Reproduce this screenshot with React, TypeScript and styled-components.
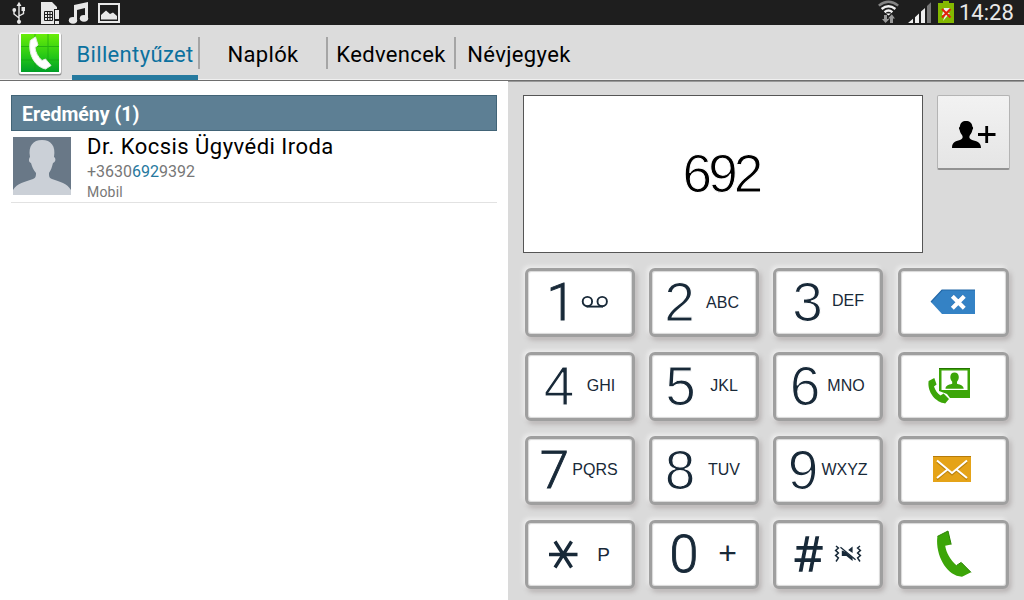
import React from "react";
import styled, { createGlobalStyle } from "styled-components";

const TABS = ["Billentyűzet", "Naplók", "Kedvencek", "Névjegyek"];

const VoicemailIcon = () => (
  <svg width="28" height="14" viewBox="0 0 28 14" fill="none" stroke="#182938" strokeWidth="1.9">
    <circle cx="6.4" cy="6.6" r="4.7" />
    <circle cx="21.2" cy="6.6" r="4.7" />
    <path d="M5.5 11.6H22" />
  </svg>
);

const VibrateIcon = () => (
  <svg width="28" height="20" viewBox="0 0 28 20" fill="none" stroke="#182938" strokeWidth="1.5">
    <path d="M2 2L4.4 4L1.6 6.4L4.4 9L1.6 11.6L4.4 14L2 17.5" />
    <path d="M26 2L23.6 4L26.4 6.4L23.6 9L26.4 11.6L23.6 14L26 17.5" />
    <path d="M7.8 6.6L11.5 7.8L18.6 13.8V17L12.4 12H7.8ZM14.2 6L18.6 2.6V9Z" fill="#182938" stroke="none" />
    <path d="M7.4 2.6L22.2 14.8" stroke="#fff" strokeWidth="1.2" />
    <path d="M6.5 3.2L21.6 15.8" strokeWidth="1.3" />
  </svg>
);

const DeleteIcon = () => (
  <svg width="46" height="26" viewBox="0 0 46 26">
    <path d="M1 13L12 1H45V25H12Z" fill="#3482c5" />
    <path d="M1 13L12 1H45" fill="none" stroke="#2368a8" strokeWidth="1.2" />
    <path d="M22.3 7L34.3 19M34.3 7L22.3 19" stroke="#1d61a2" strokeWidth="4.4" />
    <path d="M22.3 7.2L34.3 19.2M34.3 7.2L22.3 19.2" stroke="#fff" strokeWidth="4.2" />
  </svg>
);

const VideoCallIcon = () => (
  <svg width="44" height="38" viewBox="0 0 44 38" fill="#3ca508">
    <path d="M12 2H43V32H23L20 28L12 25Z" />
    <path d="M14.5 4.5H40.5V24H14.5Z" fill="#fff" />
    <path d="M12 2.5H43" stroke="#257303" />
    <path d="M18.5 22.8C18.5 19.8 21 19 25.2 17.8V15.8C22.5 13.4 22.3 6.6 27.5 6.6S32.8 13.4 30 15.8V17.8C34 19 36.5 19.8 36.7 22.8Z" />
    <path
      d="M1.6 15L7.3 11.9L9.6 18.6L7 20.4C8.3 24.4 10.4 27.2 13.5 29.6L16.6 27.6L22 33L18.2 37.4C9 36.5 0 26.5 1.6 15Z"
      stroke="#fff"
      strokeWidth="1.4"
      paintOrder="stroke"
    />
  </svg>
);

const MailIcon = () => (
  <svg width="38" height="26" viewBox="0 0 38 26" fill="none">
    <path d="M0 0H38V26H0Z" fill="#e5a318" />
    <path d="M0 .5H38" stroke="#b67b09" />
    <path d="M4 6L19 18.5L34 6M4 23.5L14.5 14.5M34 23.5L23.5 14.5" stroke="#b8810e" strokeWidth="1.8" />
    <path d="M4 4.5L19 17L34 4.5M4 22L14.5 13.5M34 22L23.5 13.5" stroke="#fff" strokeWidth="2" />
  </svg>
);

const CallIcon = () => (
  <svg width="36" height="48" viewBox="0 0 36 48">
    <path
      d="M1.4 6.4L12 1L15.2 14.5L9.2 15.8C10.2 22.5 14.2 30 20.6 35.4L25.2 32.4L35 42.3L26 46.8C10 46 -1 24 1.4 6.4Z"
      fill="#3ca508"
    />
    <path d="M1.4 6.4L12 1L15.2 14.5M20.6 35.4L25.2 32.4L35 42.3" fill="none" stroke="#2b8303" strokeWidth="1" />
  </svg>
);

type KeyData = {
  digit: string;
  at: number;
  label: React.ReactNode;
  labelAt: number;
  lift?: number;
  labelSize?: number;
};

// "at" and "labelAt" are the centres of the two parts inside the key
const ROWS: { keys: KeyData[]; action: React.ReactNode; shift: [number, number] }[] = [
  {
    keys: [
      { digit: "1", at: 36, label: <VoicemailIcon />, labelAt: 70, lift: 2 },
      { digit: "2", at: 30.5, label: "ABC", labelAt: 73.5 },
      { digit: "3", at: 34.5, label: "DEF", labelAt: 75, lift: 3 },
    ],
    action: <DeleteIcon />,
    shift: [1, 1],
  },
  {
    keys: [
      { digit: "4", at: 34, label: "GHI", labelAt: 76, lift: 2 },
      { digit: "5", at: 31.5, label: "JKL", labelAt: 75, lift: 2 },
      { digit: "6", at: 32, label: "MNO", labelAt: 73, lift: 2 },
    ],
    action: <VideoCallIcon />,
    shift: [10, 4],
  },
  {
    keys: [
      { digit: "7", at: 29.5, label: "PQRS", labelAt: 70, lift: 2 },
      { digit: "8", at: 31, label: "TUV", labelAt: 75, lift: 2 },
      { digit: "9", at: 30, label: "WXYZ", labelAt: 71.5, lift: 2 },
    ],
    action: <MailIcon />,
    shift: [4, 4],
  },
  {
    keys: [
      { digit: "*", at: 38, label: "P", labelAt: 78.5, labelSize: 19 },
      { digit: "0", at: 35, label: "+", labelAt: 78.5, lift: 4, labelSize: 32 },
      { digit: "#", at: 34.5, label: <VibrateIcon />, labelAt: 75, lift: 2 },
    ],
    action: <CallIcon />,
    shift: [0, 2],
  },
];

function StatusBar() {
  return (
    <Status>
      <svg width="122" height="25" viewBox="0 0 122 25" fill="none" stroke="#e8e8e8">
        <path d="M19 4V22M14 10V14L19 18M23.5 9V13.5L19 16" strokeWidth="1.4" />
        <path d="M16.5 6L19 1.8L21.5 6ZM21.5 7H25V11H21.5Z" fill="#e8e8e8" stroke="none" />
        <circle cx="14.3" cy="10" r="1.9" fill="#e8e8e8" stroke="none" />
        <circle cx="19" cy="21.8" r="2.1" fill="#e8e8e8" stroke="none" />
        <path d="M41 2H52L57 7V9H54V24H41Z" fill="#e8e8e8" stroke="none" />
        <path d="M44.5 11.5H52.5V20.5H44.5ZM44.5 14.5H52.5M44.5 17.5H52.5M47.5 11.5V20.5M50 11.5V20.5" stroke="#1e1e1e" />
        <path d="M55 10H59V19H55ZM55 21H59V24H55Z" fill="#e8e8e8" stroke="none" />
        <path d="M74 5L88 2V18H85V8L77 10V20H74Z" fill="#e8e8e8" stroke="none" />
        <ellipse cx="73" cy="20.3" rx="4.2" ry="3.4" fill="#e8e8e8" stroke="none" />
        <ellipse cx="84" cy="18.3" rx="4.2" ry="3.4" fill="#e8e8e8" stroke="none" />
        <path d="M99 4H119V22H99Z" strokeWidth="2" />
        <path d="M101 19.5V15L106 10.5L110 14L113 12.5L117 16V19.5Z" fill="#e8e8e8" stroke="none" />
      </svg>
      <StatusRight>
        <svg width="76" height="25" viewBox="0 0 76 25" fill="none">
          <path d="M0.8 5.6Q10.5 -2 20.2 5.6" stroke="#858585" strokeWidth="2.4" />
          <path d="M3.6 9Q10.5 3.4 17.4 9M6.6 12.2Q10.5 9 14.4 12.2" stroke="#f0f0f0" strokeWidth="2.4" />
          <path d="M8 13.4H13L10.5 15.6Z" fill="#fff" />
          <path d="M6 15H9V19H11.5L7.5 23L4 19H6ZM12 23V18.5H10L13.8 14.2L17 18.5H15V23Z" fill="#999" />
          <path d="M30 23L35 18.8V23ZM37 23V17.2L41 13.5V23ZM43 23V11.5L47 8V23Z" fill="#f0f0f0" />
          <path d="M49 23V6L53 2.2V23Z" fill="#777" />
          <path d="M60 3H65V1H71V3H76V23H60Z" fill="#84b800" />
          <path d="M66 8H72L70 13H72L65 21L67 15H64Z" fill="#eee" />
          <path d="M64 9L72.5 17.5M72.5 9L64 17.5" stroke="#e2210b" strokeWidth="2" />
        </svg>
        <Clock>14:28</Clock>
      </StatusRight>
    </Status>
  );
}

function PhoneLogo() {
  return (
    <svg width="44" height="44" viewBox="0 0 44 44">
      <defs>
        <linearGradient id="tile" x2="0" y2="1">
          <stop offset="0" stopColor="#69ed08" />
          <stop offset="0.6" stopColor="#24c717" />
          <stop offset="1" stopColor="#009f27" />
        </linearGradient>
      </defs>
      <rect x="0.5" y="1" width="43" height="42.5" rx="2.5" fill="#929292" />
      <rect x="1" y="0.5" width="42" height="41.5" rx="2" fill="#fff" />
      <path d="M3 2H41V40H3Z" fill="url(#tile)" />
      <path d="M17 2V40M30 2V40M3 14.5H41M3 28H41" stroke="#139d12" opacity="0.6" />
      <path
        d="M12.3 8.5L17.5 5L20 13L17 15.5C17.5 20.5 20 25 24 28.5L27.5 27L33 33.5L27.5 37C17.5 35 9.5 23 12.3 8.5Z"
        fill="#fff"
        stroke="#e1ede0"
      />
    </svg>
  );
}

function Results() {
  return (
    <ResultPanel>
      <ResultTitle>Eredmény (1)</ResultTitle>
      <Contact>
        <svg width="58" height="58" viewBox="0 0 58 58">
          <path d="M0 0H58V58H0Z" fill="#697887" />
          <path
            d="M0 58V53C4 46 12 45 20 42C23 41 23 38 23 36C20 33 19 29 18 26C15 25 16 21 17 20C15 9 20 3 29 3S43 9 41 20C43 21 43 25 40 26C39 30 38 33 36 36C36 39 36 41 39 42C47 45 54 46 58 53V58Z"
            fill="#cbd0d7"
          />
        </svg>
        <ContactText>
          <ContactName>Dr. Kocsis Ügyvédi Iroda</ContactName>
          <ContactNumber>
            +3630<Match>692</Match>9392
          </ContactNumber>
          <ContactType>Mobil</ContactType>
        </ContactText>
      </Contact>
    </ResultPanel>
  );
}

function Digit({ digit }: { digit: string }) {
  if (digit === "*") {
    return (
      <svg width="30" height="30" viewBox="0 0 30 30" stroke="#182938" strokeWidth="3.4">
        <path d="M1 14.5H29.5M7 1.5L23.5 27.5M23.5 1.5L7 27.5" />
      </svg>
    );
  }
  return <>{digit}</>;
}

function Dialer() {
  return (
    <DialPanel>
      <DisplayRow>
        <Display>692</Display>
        <AddButton>
          <svg width="46" height="30" viewBox="0 0 46 30">
            <path d="M1 28C1 21.5 5 21.5 10 19.5C12 18.5 12 16.5 11 15C9.5 13.5 9 11.5 8.6 9.7C7.5 9 8 7 9 6.5C9 3 11.5 1 15 1S21.3 3 21.3 6.5C22.3 7 22.5 9 21.4 9.7C21 11.7 20.5 13.5 19 15C18 16.5 18 18.5 20 19.5C25 21.5 30 21.5 30 28Z" />
            <path d="M27 14.5H44.5M35.7 6V23" stroke="#000" strokeWidth="2.8" />
          </svg>
        </AddButton>
      </DisplayRow>
      <Pad>
        {ROWS.map((row, i) => (
          <React.Fragment key={i}>
            {row.keys.map((k) => (
              <Key key={k.digit}>
                <DigitBox $at={k.at} $kind={k.digit}>
                  <Digit digit={k.digit} />
                </DigitBox>
                <Label
                  $gap={k.labelAt - k.at - 44}
                  $lift={k.lift || 0}
                  $size={k.labelSize || 16}
                >
                  {k.label}
                </Label>
              </Key>
            ))}
            <ActionKey $right={row.shift[0]} $bottom={row.shift[1]}>
              {row.action}
            </ActionKey>
          </React.Fragment>
        ))}
      </Pad>
    </DialPanel>
  );
}

function App() {
  return (
    <Screen>
      <GlobalStyle />
      <StatusBar />
      <TabBar>
        <PhoneLogo />
        <Tabs>
          {TABS.map((tab, i) => (
            <Tab key={tab} $active={i === 0} $last={i === TABS.length - 1}>
              {tab}
            </Tab>
          ))}
        </Tabs>
      </TabBar>
      <Content>
        <Results />
        <Dialer />
      </Content>
    </Screen>
  );
}

export default App;

const GlobalStyle = createGlobalStyle`
  * {
    box-sizing: border-box;
  }
  body {
    margin: 0;
    overflow: hidden;
    font-family: Roboto, sans-serif;
  }
  svg {
    display: block;
    flex-shrink: 0;
  }
`;

const Screen = styled.div`
  width: 1024px;
  height: 600px;
  display: flex;
  flex-direction: column;
`;

const Status = styled.header`
  height: 25px;
  display: flex;
  justify-content: space-between;
  background: #1e1e1e;
`;

const StatusRight = styled.div`
  display: flex;
  width: 146px;
`;

const Clock = styled.span`
  margin-left: 5px;
  color: #e8e8e8;
  font-size: 22px;
  line-height: 25px;
`;

const TabBar = styled.nav`
  height: 56px;
  padding: 7px 0 0 18px;
  display: flex;
  align-items: flex-start;
  background: #dcdcdc;
  border-bottom: 1px solid #6e6e6e;
  box-shadow: inset 0 -1px #f0f0f0;
`;

const Tabs = styled.div`
  display: flex;
  margin: -7px 0 0 10px;
`;

const Tab = styled.div<{ $active: boolean; $last: boolean }>`
  width: 128px;
  height: 55px;
  display: flex;
  align-items: center;
  justify-content: center;
  padding: 4px 2px 0 0;
  font-size: 22px;
  letter-spacing: 0.35px;
  color: ${(props) => (props.$active ? "#0c719f" : "#000")};
  background:
    linear-gradient(#a5a5a5, #a5a5a5) right 0 top 12px / ${(props) => (props.$last ? 0 : 2)}px 32px no-repeat,
    linear-gradient(#267a9f, #267a9f) left bottom / ${(props) => (props.$active ? 126 : 0)}px 5px no-repeat;
`;

const Content = styled.main`
  flex: 1;
  display: flex;
`;

const ResultPanel = styled.section`
  width: 508px;
  padding: 14px 11px 0;
  background: #fff;
`;

const ResultTitle = styled.h2`
  height: 36px;
  margin: 0;
  padding: 1px 0 0 10px;
  border: 1px solid #426477;
  background: #5d7f94;
  color: #fff;
  font-size: 19.5px;
  font-weight: 700;
  line-height: 35px;
`;

const Contact = styled.div`
  height: 72px;
  padding: 6px 0 0 2px;
  display: flex;
  gap: 16px;
  border-bottom: 1px solid #e2e2e2;
`;

const ContactText = styled.div`
  margin-top: -6px;
  color: #777;
`;

const ContactName = styled.div`
  color: #000;
  font-size: 22px;
  line-height: 31px;
  letter-spacing: 0.47px;
`;

const ContactNumber = styled.div`
  font-size: 16px;
  line-height: 20px;
`;

const Match = styled.span`
  color: #26789e;
`;

const ContactType = styled.div`
  font-size: 14px;
  line-height: 20px;
  letter-spacing: 0.2px;
`;

const DialPanel = styled.section`
  flex: 1;
  padding: 14px 14px 0 15px;
  background: #dadada;
  box-shadow: inset 0 1px #999;
`;

const DisplayRow = styled.div`
  display: flex;
  align-items: flex-start;
  justify-content: space-between;
`;

const Display = styled.div`
  width: 400px;
  height: 158px;
  padding-right: 4px;
  border: 1px solid #555;
  background: #fff;
  text-align: center;
  font-family: "Liberation Sans", sans-serif;
  font-size: 53px;
  line-height: 156px;
  letter-spacing: -3.8px;
  -webkit-text-stroke: 1px #fff;
`;

const AddButton = styled.div`
  width: 73px;
  height: 75px;
  display: flex;
  align-items: center;
  justify-content: center;
  padding: 5px 0 0 1px;
  border: 1px solid #b4b4b4;
  border-bottom: 2px solid #929292;
  border-radius: 2px;
  background: linear-gradient(#f2f2f2, #e5e5e5);
`;

const Pad = styled.div`
  display: grid;
  grid-template-columns: 124px 124px 125px 111px;
  grid-auto-rows: 84px;
  margin: 15px 0 0 2px;
`;

const Key = styled.div`
  width: 110px;
  height: 69px;
  display: flex;
  align-items: center;
  border: 3px solid #9f9f9f;
  border-radius: 6px;
  background: #fff;
  box-shadow:
    inset 0 0 1px 1px #d8d8d8,
    -2px -2px 4px #eee,
    2px 3px 5px #b5b0b0;
  color: #182938;
`;

const ActionKey = styled(Key)<{ $right: number; $bottom: number }>`
  width: 111px;
  padding: 0 ${(props) => props.$right}px ${(props) => props.$bottom}px 0;
  justify-content: center;
`;

// the round digits use the Helvetica shapes, thinned by a white outline
const DigitBox = styled.div<{ $at: number; $kind: string }>`
  width: 40px;
  margin-left: ${(props) => props.$at - 23}px;
  display: flex;
  justify-content: center;
  line-height: 63px;
  ${(props) =>
    "2345689".includes(props.$kind)
      ? `
    font-family: "Liberation Sans", sans-serif;
    font-size: 55px;
    -webkit-text-stroke: 1.2px #fff;
  `
      : `
    font-size: ${props.$kind === "#" ? 49 : 52}px;
    font-weight: 300;
    -webkit-text-stroke: ${props.$kind === "#" ? 1.4 : 0.9}px #182938;
  `}
`;

const Label = styled.div<{ $gap: number; $lift: number; $size: number }>`
  width: 48px;
  margin-left: ${(props) => props.$gap}px;
  padding-bottom: ${(props) => props.$lift}px;
  display: flex;
  justify-content: center;
  font-family: "Liberation Sans", sans-serif;
  font-size: ${(props) => props.$size}px;
  line-height: 20px;
`;
